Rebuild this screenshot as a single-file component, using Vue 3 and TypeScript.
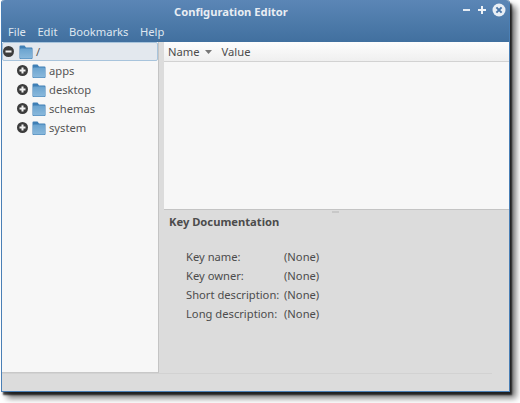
<script setup lang="ts">
const items: string[] = ['apps', 'desktop', 'schemas', 'system']
const menus: string[] = ['File', 'Edit', 'Bookmarks', 'Help']
const docs: [string, string][] = [
  ['Key name:', '(None)'],
  ['Key owner:', '(None)'],
  ['Short description:', '(None)'],
  ['Long description:', '(None)'],
]
</script>

<template>
  <div class="page">
    <div class="window">
      <header class="head">
        <div class="titlebar">
          <span class="title">Configuration Editor</span>
          <div class="controls">
            <svg width="10" height="10" viewBox="0 0 10 10"><rect x="1" y="4" width="7" height="2" fill="#e4ebf3" /></svg>
            <svg width="10" height="10" viewBox="0 0 10 10"><path d="M1 5h8M5 1v8" stroke="#eef2f7" stroke-width="2" /></svg>
            <svg width="14" height="14" viewBox="0 0 14 14"><circle cx="7" cy="7" r="6.5" fill="#e8eef5" /><path d="M4.4 4.4l5.2 5.2M9.6 4.4l-5.2 5.2" stroke="#4a76a8" stroke-width="2" /></svg>
          </div>
        </div>
        <nav class="menubar">
          <span v-for="m in menus" :key="m">{{ m }}</span>
        </nav>
      </header>
      <div class="body">
        <aside class="tree">
          <div class="row root">
            <svg class="exp" width="11" height="11" viewBox="0 0 11 11"><circle cx="5.5" cy="5.5" r="5.5" fill="#3c3c3c" /><rect x="2.5" y="4.5" width="6" height="2" fill="#f2f2f2" /></svg>
            <svg class="folder" width="14" height="14" viewBox="0 0 14 14"><defs><linearGradient id="fg" x1="0" y1="0" x2="0" y2="1"><stop offset="0" stop-color="#6aa3cf" /><stop offset="1" stop-color="#8ab9dc" /></linearGradient></defs><path d="M0.5 3V1.5a1 1 0 0 1 1-1h4l1.5 2h5.5a1 1 0 0 1 1 1V13a1 1 0 0 1-1 1h-11a1 1 0 0 1-1-1z" fill="#3f7fb5" /><rect x="1" y="3.5" width="12" height="10" rx="1" fill="url(#fg)" /></svg>
            <span>/</span>
          </div>
          <div v-for="i in items" :key="i" class="row child">
            <svg class="exp" width="11" height="11" viewBox="0 0 11 11"><circle cx="5.5" cy="5.5" r="5.5" fill="#3c3c3c" /><path d="M2.5 5.5h6M5.5 2.5v6" stroke="#f2f2f2" stroke-width="2" /></svg>
            <svg class="folder" width="14" height="14" viewBox="0 0 14 14"><path d="M0.5 3V1.5a1 1 0 0 1 1-1h4l1.5 2h5.5a1 1 0 0 1 1 1V13a1 1 0 0 1-1 1h-11a1 1 0 0 1-1-1z" fill="#3f7fb5" /><rect x="1" y="3.5" width="12" height="10" rx="1" fill="url(#fg)" /></svg>
            <span>{{ i }}</span>
          </div>
        </aside>
        <main class="right">
          <section class="list">
            <div class="cols">
              <span class="name">Name</span>
              <svg width="7" height="4" viewBox="0 0 7 4"><path d="M0 0h7L3.5 4z" fill="#777" /></svg>
              <span class="value">Value</span>
            </div>
          </section>
          <div class="grip"></div>
          <section class="doc">
            <h2>Key Documentation</h2>
            <dl>
              <template v-for="d in docs" :key="d[0]">
                <dt>{{ d[0] }}</dt>
                <dd>{{ d[1] }}</dd>
              </template>
            </dl>
          </section>
        </main>
      </div>
      <footer class="status"><div class="line"></div></footer>
    </div>
  </div>
</template>

<style scoped>
.page {
  width: 520px;
  height: 403px;
  padding: 0 10px 11px 1px;
  box-sizing: border-box;
  background: #fff;
  font-family: "Noto Sans", "Open Sans", sans-serif;
  font-size: 11.2px;
  color: #4c4c4c;
}
.window {
  height: 100%;
  box-sizing: border-box;
  display: flex;
  flex-direction: column;
  background: #dcdcdc;
  border: 1px solid #4a7fb5;
  border-top: 0;
  border-radius: 3px 3px 0 0;
  box-shadow: 6px 6px 6px rgba(0, 0, 0, 0.55), 2px 3px 2px rgba(0, 0, 0, 0.75);
}
.head {
  height: 42px;
  flex: none;
  background: linear-gradient(#5b86b6, #41709f);
  border-radius: 3px 3px 0 0;
  color: #fff;
}
.titlebar {
  height: 23px;
  display: flex;
  align-items: center;
  position: relative;
  padding-left: 172px;
}
.title {
  font-weight: 700;
  font-size: 11.2px;
  color: #e8edf3;
}
.controls {
  position: absolute;
  right: 3px;
  top: 3px;
  display: flex;
  align-items: center;
  gap: 5px;
}
.menubar {
  height: 17px;
  display: flex;
  align-items: center;
  gap: 11.5px;
  padding-left: 6px;
  font-size: 11.2px;
  color: #dfe7f0;
}
.body {
  flex: 1;
  display: flex;
  min-height: 0;
}
.tree {
  width: 156px;
  flex: none;
  background: #f7f7f7;
  border-right: 1px solid #c4c4c4;
  border-bottom: 1px solid #c8c8c8;
}
.row {
  height: 19px;
  display: flex;
  align-items: center;
  color: #555;
}
.root {
  height: 19px;
  background: #e3e8ee;
  border: 1px solid #a8c4dc;
  border-radius: 2px;
  box-sizing: border-box;
}
.root .exp { margin-left: 0; }
.root .folder { margin-left: 5px; }
.child .exp { margin-left: 15px; }
.child .folder { margin-left: 4px; }
.row span { margin-left: 3px; }
.right {
  flex: 1;
  display: flex;
  flex-direction: column;
  min-width: 0;
  margin-left: 5px;
}
.list {
  height: 167px;
  flex: none;
  background: #f7f7f7;
  border-bottom: 1px solid #c4c4c4;
}
.cols {
  height: 19px;
  display: flex;
  align-items: center;
  background: linear-gradient(#fdfdfd, #efefef);
  border-bottom: 1px solid #d2d2d2;
  padding-left: 4px;
}
.cols svg { margin-left: 5px; }
.value { margin-left: 10px; }
.grip {
  height: 2px;
  width: 7px;
  margin: 1px 0 0 168px;
  background: #c8c8c8;
}
.doc {
  flex: 1;
  padding: 1px 0 0 5px;
}
h2 {
  margin: 0;
  font-size: 11.2px;
  line-height: 16px;
  font-weight: 700;
  color: #4c4c4c;
}
dl {
  margin: 17px 0 0 17px;
  display: grid;
  grid-template-columns: 98px auto;
  justify-content: start;
  grid-auto-rows: 19px;
  align-items: center;
}
dd { margin: 0; }
.status {
  height: 18px;
  flex: none;
}
.line { height: 1px; background: #d2d2d2; width: 490px; }
</style>
